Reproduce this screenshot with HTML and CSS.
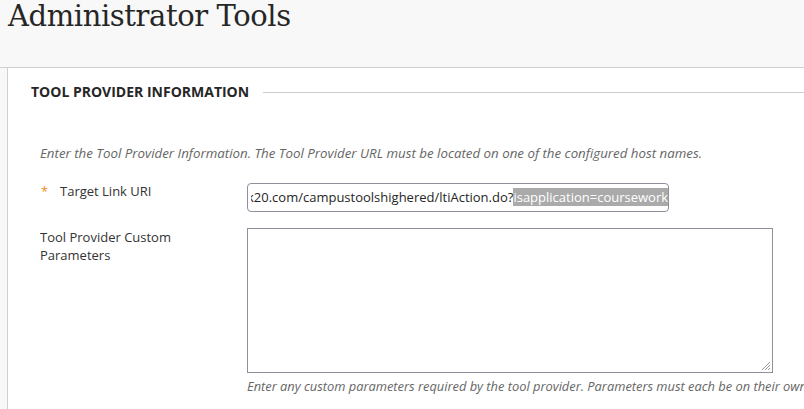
FILE: index.html
```html
<!DOCTYPE html>
<html lang="en">
<head>
    <meta charset="UTF-8">
    <title>Administrator Tools</title>
    <link rel="stylesheet" href="styles.css">
</head>
<body>
<div class="page-header">
    <h1>Administrator Tools</h1>
</div>
<div class="content">
    <div class="step">
        <div class="step-title">
            <h2>Tool Provider Information</h2>
            <span class="rule"></span>
        </div>
        <p class="instructions">Enter the Tool Provider Information. The Tool Provider URL must be located on one of the configured host names.</p>

        <div class="field">
            <div class="label"><span class="req">*</span>Target Link URI</div>
            <div class="text-input">
                <div class="scrolled">k20.com/campustoolshighered/ltiAction.do?<span class="selected">isapplication=coursework</span></div>
            </div>
        </div>

        <div class="field second">
            <div class="label plain">Tool Provider Custom Parameters</div>
            <div class="field-body">
                <div class="textarea">
                    <svg class="grip" width="9" height="9" viewBox="0 0 9 9">
                        <path d="M9 1 L1 9 M9 4 L4 9 M9 7 L7 9" stroke="#999" stroke-width="1"/>
                    </svg>
                </div>
                <p class="help">Enter any custom parameters required by the tool provider. Parameters must each be on their own line.</p>
            </div>
        </div>
    </div>
</div>
</body>
</html>
```

FILE: styles.css
```css
body {
    margin: 0;
    background: #f8f8f8;
    font-family: "Open Sans", sans-serif;
    color: #333;
    overflow: hidden;
}

.page-header {
    height: 67px;
    border-bottom: 1px solid #d0d0d0;
    padding-left: 8px;
}

.page-header h1 {
    margin: 0;
    font-family: "DejaVu Serif", serif;
    font-weight: normal;
    font-size: 29px;
    line-height: 32px;
    color: #262626;
    letter-spacing: -0.4px;
}

.content {
    margin-left: 7px;
    border-left: 1px solid #d0d0d0;
    background: #fff;
    height: 341px;
    overflow: hidden;
}

.step {
    padding: 12px 0 0 23px;
}

.step-title {
    display: flex;
    align-items: center;
    gap: 14px;
}

.step-title h2 {
    margin: 0;
    font-size: 14px;
    font-weight: bold;
    text-transform: uppercase;
    line-height: 24px;
    color: #262626;
}

.rule {
    flex: 1;
    border-top: 1px solid #cdcdcd;
}

.instructions {
    margin: 40px 0 0 9px;
    font-size: 13.3px;
    font-style: italic;
    color: #666;
    line-height: 18px;
}

.field {
    display: flex;
    margin-left: 9px;
    margin-top: 20px;
}

.field.second {
    margin-top: 16px;
}

.label {
    width: 207px;
    font-size: 13px;
    line-height: 18px;
    flex-shrink: 0;
}

.label.plain {
    width: 150px;
    margin-right: 57px;
}

.req {
    display: inline-block;
    width: 20px;
    padding-left: 1px;
    box-sizing: border-box;
    color: #f08b1c;
}

.text-input {
    width: 417px;
    height: 27px;
    margin-top: 1px;
    padding-left: 3px;
    border: 1px solid #8f8f9d;
    border-radius: 4px;
    white-space: nowrap;
    font-size: 13px;
    line-height: 27px;
    color: #262626;
}

.scrolled {
    overflow: hidden;
}

.scrolled::before {
    content: "";
    margin-left: -4px;
}

.selected {
    background: #aaa;
    color: #fff;
}

.field-body {
    width: 600px;
}

.textarea {
    position: relative;
    width: 524px;
    height: 143px;
    border: 1px solid #8f8f9d;
}

.grip {
    position: absolute;
    right: 2px;
    bottom: 2px;
}

.help {
    margin: 4px 0 0 0;
    font-size: 12.85px;
    font-style: italic;
    color: #666;
    line-height: 18px;
    white-space: nowrap;
}
```
